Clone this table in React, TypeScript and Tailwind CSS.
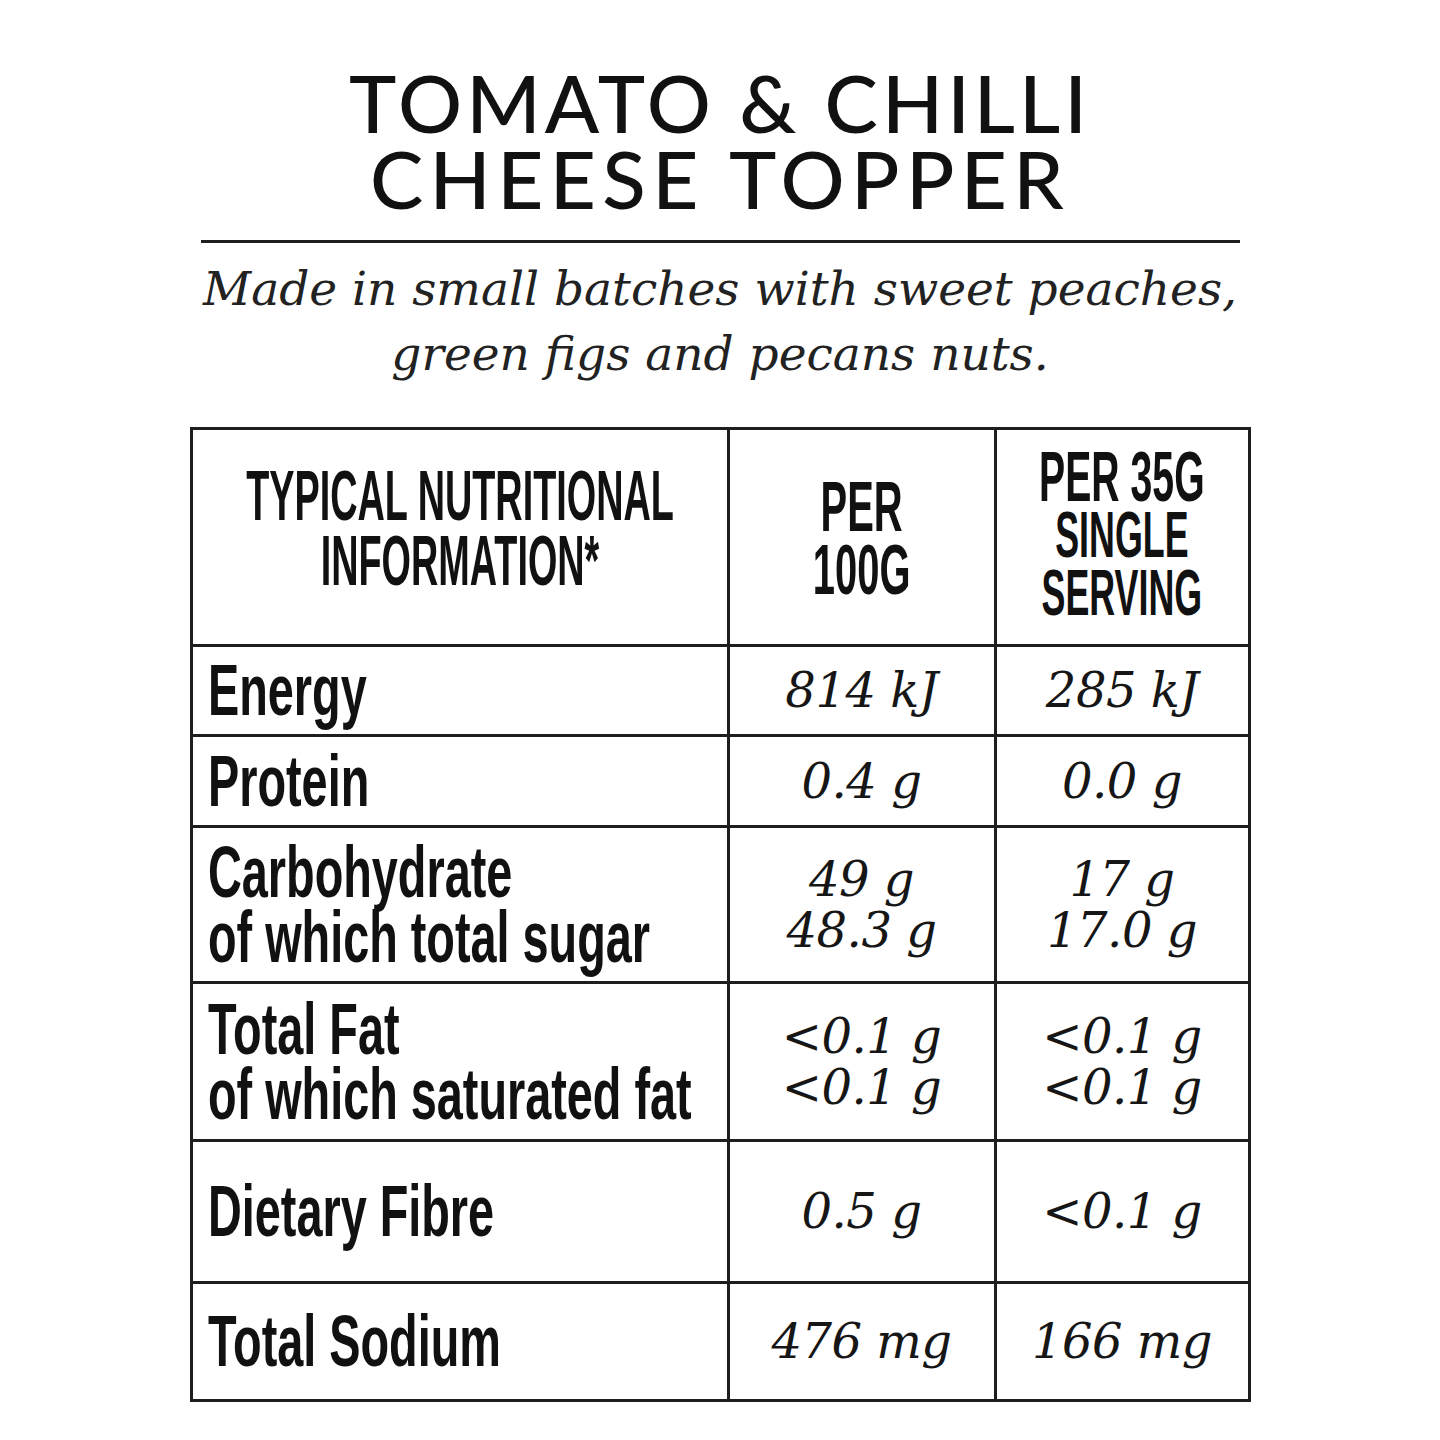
import React from 'react';

type Row = {
    label: string[];
    per100: string[];
    perServe: string[];
    height: string;
};

const rows: Row[] = [
    { label: ['Energy'], per100: ['814 kJ'], perServe: ['285 kJ'], height: 'h-[90px]' },
    { label: ['Protein'], per100: ['0.4 g'], perServe: ['0.0 g'], height: 'h-[91px]' },
    { label: ['Carbohydrate', 'of which total sugar'], per100: ['49 g', '48.3 g'], perServe: ['17 g', '17.0 g'], height: 'h-[156px]' },
    { label: ['Total Fat', 'of which saturated fat'], per100: ['<0.1 g', '<0.1 g'], perServe: ['<0.1 g', '<0.1 g'], height: 'h-[158px]' },
    { label: ['Dietary Fibre'], per100: ['0.5 g'], perServe: ['<0.1 g'], height: 'h-[142px]' },
    { label: ['Total Sodium'], per100: ['476 mg'], perServe: ['166 mg'], height: 'h-[115px]' },
];

const condensed = "font-['Liberation_Sans',Arial,sans-serif] font-bold whitespace-nowrap";
const serif = "font-['DejaVu_Serif','Liberation_Serif',serif] italic";
const cols = 'grid grid-cols-[537px_267px_251px]';

const Values: React.FC<{ lines: string[] }> = ({ lines }) => (
    <div className={`${serif} text-[48px] leading-[51px] tracking-[-0.01em] text-center text-[#161616]`}>
        {lines.map((l, i) => (
            <div key={i}>{l}</div>
        ))}
    </div>
);

export default function App() {
    return (
        <div className="min-h-screen bg-white text-[#111]">
            <div className="mx-auto w-[1061px] pt-[64px] pb-10">
                {/* Title */}
                <h1 className="font-['Lato','Inter',sans-serif] font-medium text-[80px] leading-[76px] text-center">
                    <div className="tracking-[0.05em]">TOMATO &amp; CHILLI</div>
                    <div className="tracking-[0.08em]">CHEESE TOPPER</div>
                </h1>

                <div className="mx-[11px] mt-6 h-[3px] bg-[#1e1e1e]" />

                <p className={`${serif} mt-[13px] text-[47px] leading-[65px] text-center text-[#222]`}>
                    Made in small batches with sweet peaches,
                    <br />
                    green figs and pecans nuts.
                </p>

                {/* Nutrition table */}
                <div className="mt-[41px] border-[3px] border-[#1e1e1e]">
                    <div className={`${cols} h-[217px] border-b-[3px] border-[#1e1e1e]`}>
                        <div className="flex items-center justify-center overflow-visible border-r-[3px] border-[#1e1e1e] pb-4">
                            <div className={`${condensed} w-max shrink-0 text-center text-[70px] leading-[65px] scale-x-[0.54]`}>
                                <div>TYPICAL NUTRITIONAL</div>
                                <div>INFORMATION*</div>
                            </div>
                        </div>
                        <div className="flex items-center justify-center border-r-[3px] border-[#1e1e1e] pt-1">
                            <div className={`${condensed} w-max shrink-0 text-center text-[70px] leading-[63px] scale-x-[0.57]`}>
                                <div>PER</div>
                                <div>100G</div>
                            </div>
                        </div>
                        <div className="flex items-center justify-center pb-1">
                            <div className={`${condensed} w-max shrink-0 text-center leading-[58px] scale-x-[0.56]`}>
                                <div className="text-[70px]">PER 35G</div>
                                <div className="text-[64px]">SINGLE</div>
                                <div className="text-[64px]">SERVING</div>
                            </div>
                        </div>
                    </div>

                    {rows.map((r, i) => (
                        <div
                            key={i}
                            className={`${cols} ${r.height} ${i < rows.length - 1 ? 'border-b-[3px] border-[#1e1e1e]' : ''}`}
                        >
                            <div className="flex items-center border-r-[3px] border-[#1e1e1e] pl-[15px]">
                                <div className={`${condensed} w-full origin-left text-[72px] leading-[65px] scale-x-[0.65]`}>
                                    {r.label.map((l, j) => (
                                        <div key={j}>{l}</div>
                                    ))}
                                </div>
                            </div>
                            <div className="flex items-center justify-center border-r-[3px] border-[#1e1e1e]">
                                <Values lines={r.per100} />
                            </div>
                            <div className="flex items-center justify-center">
                                <Values lines={r.perServe} />
                            </div>
                        </div>
                    ))}
                </div>
            </div>
        </div>
    );
}
